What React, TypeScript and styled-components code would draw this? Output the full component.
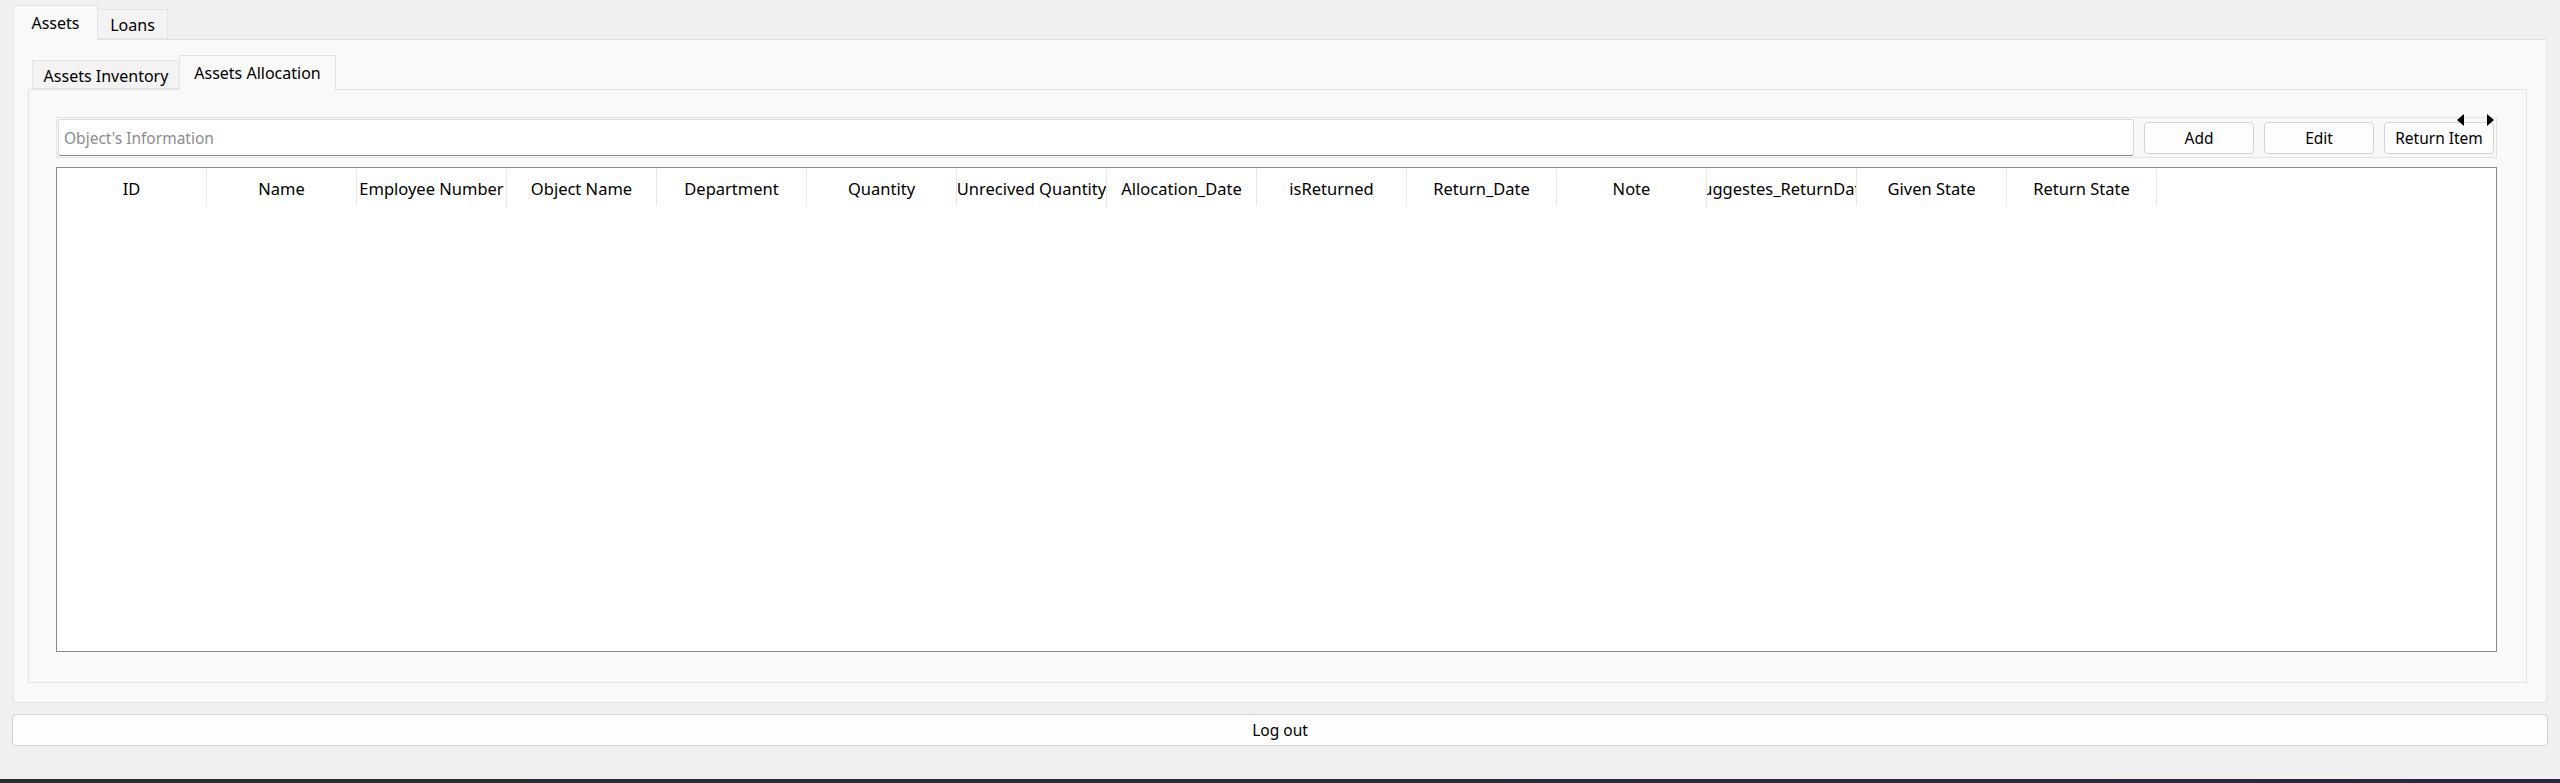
import React from "react";
import styled, { createGlobalStyle } from "styled-components";

const Global = createGlobalStyle`
  html, body { margin: 0; padding: 0; background: #f0f0f0; }
  body { font-family: "Noto Sans", "Open Sans", sans-serif; font-size: 15.5px; color: #000; }
  * { box-sizing: border-box; }
`;

const Page = styled.div`
  width: 2560px;
  height: 783px;
  display: flex;
  flex-direction: column;
  padding: 5px 12px 0 12px;
  overflow: hidden;
`;

const TabWidget = styled.div<{ $inner?: boolean }>`
  display: flex;
  flex-direction: column;
  flex: 1;
  margin: ${(p) => (p.$inner ? "0" : "0 1px")};
  min-height: 0;
`;

const TabBar = styled.div<{ $inner?: boolean }>`
  display: flex;
  align-items: flex-end;
  height: 34px;
  padding-left: ${(p) => (p.$inner ? "4px" : "0")};
  position: relative;
  z-index: 1;
`;

const Tab = styled.div<{ $active?: boolean; $inner?: boolean; $w: number }>`
  display: flex;
  align-items: center;
  justify-content: center;
  width: ${(p) => p.$w}px;
  flex: none;
  height: ${(p) => (p.$active ? "35px" : p.$inner ? "29px" : "30px")};
  margin-bottom: ${(p) => (p.$active ? "-1px" : "0")};
  padding-top: ${(p) => (p.$active ? "0" : "2px")};
  background: ${(p) => (p.$active ? "#f9f9f9" : "#f3f3f3")};
  border: 1px solid #e3e3e3;
  border-bottom: ${(p) => (p.$active ? "none" : "1px solid #e3e3e3")};
  margin-left: -1px;
  white-space: nowrap;
  font-size: 16px;
  &:first-child { margin-left: 0; }
`;

const Pane = styled.div<{ $inner?: boolean }>`
  flex: 1;
  display: flex;
  flex-direction: column;
  background: #f9f9f9;
  border: 1px solid #e3e3e3;
  padding: ${(p) => (p.$inner ? "27px 29px 30px 27px" : "15px 19px 19px 14px")};
  min-height: 0;
  position: relative;
`;

const Toolbar = styled.div`
  display: flex;
  align-items: center;
  gap: 10px;
  height: 41px;
  border: 1px solid #e3e3e3;
  padding: 1px 2px 1px 1px;
  position: relative;
  background: #f8f8f8;
`;

const Search = styled.input`
  flex: 1;
  height: 37px;
  border: 1px solid #dadada;
  border-bottom: 1px solid #8a8a8a;
  border-radius: 3px;
  background: #fff;
  padding: 0 5px;
  font-family: inherit;
  font-size: 15.5px;
  color: #000;
  outline: none;
  &::placeholder { color: #8c8c8c; }
`;

const Button = styled.button<{ $wide?: boolean }>`
  width: ${(p) => (p.$wide ? "100%" : "110px")};
  height: 32px;
  flex: none;
  background: #fdfdfd;
  border: 1px solid #d2d2d2;
  border-radius: 4px;
  font-family: inherit;
  font-size: 15.5px;
  color: #000;
  padding: 0;
`;

const Arrows = styled.div`
  position: absolute;
  right: 2px;
  top: -4px;
  width: 37px;
  display: flex;
  justify-content: space-between;
`;

const Arrow = styled.div<{ $dir: "left" | "right" }>`
  width: 0;
  height: 0;
  border-top: 6px solid transparent;
  border-bottom: 6px solid transparent;
  ${(p) => (p.$dir === "left" ? "border-right: 7px solid #000;" : "border-left: 7px solid #000;")}
`;

const Table = styled.div`
  flex: 1;
  margin-top: 9px;
  border: 1px solid #858a92;
  background: #fff;
`;

const HeaderRow = styled.div`
  display: flex;
  height: 38px;
  padding-top: 1px;
`;

const HeaderCell = styled.div`
  width: 150px;
  flex: none;
  height: 37px;
  display: flex;
  align-items: center;
  justify-content: center;
  overflow: hidden;
  white-space: nowrap;
  border-right: 1px solid #e6e6e6;
  font-size: 16.5px;
  padding-top: 1px;
  & > span { flex: none; }
`;

const LogoutRow = styled.div`
  margin-top: 11px;
  margin-bottom: 33px;
  display: flex;
`;

const TaskBar = styled.div`
  height: 4px;
  margin: 0 -12px;
  background: linear-gradient(90deg, #262c30 0%, #2a2b38 60%, #2b2442 100%);
`;

const columns = [
  "ID",
  "Name",
  "Employee Number",
  "Object Name",
  "Department",
  "Quantity",
  "Unrecived Quantity",
  "Allocation_Date",
  "isReturned",
  "Return_Date",
  "Note",
  "Suggestes_ReturnDate",
  "Given State",
  "Return State",
];

export default function App() {
  return (
    <>
      <Global />
      <Page>
        <TabWidget>
          <TabBar>
            <Tab $w={85} $active>Assets</Tab>
            <Tab $w={71}>Loans</Tab>
          </TabBar>
          <Pane>
            <TabWidget $inner>
              <TabBar $inner>
                <Tab $w={148} $inner>Assets Inventory</Tab>
                <Tab $w={157} $inner $active>Assets Allocation</Tab>
              </TabBar>
              <Pane $inner>
                <Toolbar>
                  <Search placeholder="Object's Information" />
                  <Button>Add</Button>
                  <Button>Edit</Button>
                  <Button>Return Item</Button>
                  <Arrows>
                    <Arrow $dir="left" />
                    <Arrow $dir="right" />
                  </Arrows>
                </Toolbar>
                <Table>
                  <HeaderRow>
                    {columns.map((c) => (
                      <HeaderCell key={c}>
                        <span>{c}</span>
                      </HeaderCell>
                    ))}
                  </HeaderRow>
                </Table>
              </Pane>
            </TabWidget>
          </Pane>
        </TabWidget>
        <LogoutRow>
          <Button $wide>Log out</Button>
        </LogoutRow>
        <TaskBar />
      </Page>
    </>
  );
}
